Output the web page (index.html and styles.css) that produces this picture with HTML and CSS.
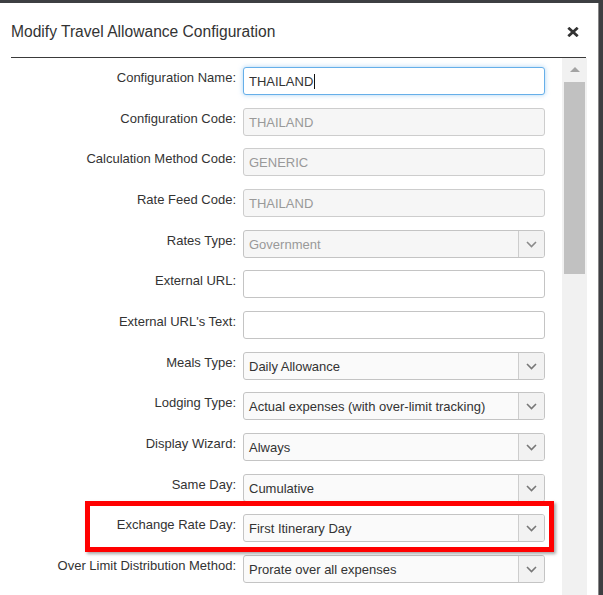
FILE: index.html
```html
<!DOCTYPE html>
<html>
<head>
<meta charset="utf-8">
<link rel="stylesheet" href="styles.css">
</head>
<body>
<div class="modal">
  <div class="header">
    <h1 class="title">Modify Travel Allowance Configuration</h1>
    <button class="close" aria-label="Close">
      <svg width="12" height="10" viewBox="0 0 12 10"><path d="M1.3 0.8 L10.7 9.2 M10.7 0.8 L1.3 9.2" stroke="#333" stroke-width="2.8" stroke-linecap="butt"/></svg>
    </button>
  </div>
  <div class="body">
    <div class="form">
      <label class="lbl">Configuration Name:</label>
      <div class="ctl input focus"><span>THAILAND</span><span class="caret"></span></div>

      <label class="lbl">Configuration Code:</label>
      <div class="ctl input disabled"><span>THAILAND</span></div>

      <label class="lbl">Calculation Method Code:</label>
      <div class="ctl input disabled"><span>GENERIC</span></div>

      <label class="lbl">Rate Feed Code:</label>
      <div class="ctl input disabled"><span>THAILAND</span></div>

      <label class="lbl">Rates Type:</label>
      <div class="ctl select disabled"><span class="val">Government</span><span class="btn"><svg width="11" height="7" viewBox="0 0 11 7"><path d="M1 1 L5.5 5.5 L10 1" fill="none" stroke="#8a8a8a" stroke-width="1.6"/></svg></span></div>

      <label class="lbl">External URL:</label>
      <div class="ctl input"></div>

      <label class="lbl">External URL's Text:</label>
      <div class="ctl input"></div>

      <label class="lbl">Meals Type:</label>
      <div class="ctl select"><span class="val">Daily Allowance</span><span class="btn"><svg width="11" height="7" viewBox="0 0 11 7"><path d="M1 1 L5.5 5.5 L10 1" fill="none" stroke="#777" stroke-width="1.6"/></svg></span></div>

      <label class="lbl">Lodging Type:</label>
      <div class="ctl select"><span class="val">Actual expenses (with over-limit tracking)</span><span class="btn"><svg width="11" height="7" viewBox="0 0 11 7"><path d="M1 1 L5.5 5.5 L10 1" fill="none" stroke="#777" stroke-width="1.6"/></svg></span></div>

      <label class="lbl">Display Wizard:</label>
      <div class="ctl select"><span class="val">Always</span><span class="btn"><svg width="11" height="7" viewBox="0 0 11 7"><path d="M1 1 L5.5 5.5 L10 1" fill="none" stroke="#777" stroke-width="1.6"/></svg></span></div>

      <label class="lbl">Same Day:</label>
      <div class="ctl select"><span class="val">Cumulative</span><span class="btn"><svg width="11" height="7" viewBox="0 0 11 7"><path d="M1 1 L5.5 5.5 L10 1" fill="none" stroke="#777" stroke-width="1.6"/></svg></span></div>

      <label class="lbl">Exchange Rate Day:</label>
      <div class="ctl select"><span class="val">First Itinerary Day</span><span class="btn"><svg width="11" height="7" viewBox="0 0 11 7"><path d="M1 1 L5.5 5.5 L10 1" fill="none" stroke="#777" stroke-width="1.6"/></svg></span></div>

      <label class="lbl">Over Limit Distribution Method:</label>
      <div class="ctl select"><span class="val">Prorate over all expenses</span><span class="btn"><svg width="11" height="7" viewBox="0 0 11 7"><path d="M1 1 L5.5 5.5 L10 1" fill="none" stroke="#777" stroke-width="1.6"/></svg></span></div>
    </div>
    <div class="scrollbar">
      <div class="arrow"></div>
      <div class="thumb"></div>
    </div>
  </div>
</div>
<div class="highlight"></div>
</body>
</html>
```

FILE: styles.css
```css
html, body {
  margin: 0;
  padding: 0;
}
body {
  background: #3d3f42;
  width: 603px;
  height: 595px;
  overflow: hidden;
  padding-top: 3px;
  box-sizing: border-box;
  font-family: "Liberation Sans", Arial, sans-serif;
}
.modal {
  width: 599px;
  height: 592px;
  background: #fff;
  overflow: hidden;
  border-right: 1px solid #888;
  box-sizing: border-box;
}
.header {
  display: flex;
  align-items: center;
  justify-content: space-between;
  height: 54px;
  margin: 0 12px 0 11px;
  border-bottom: 1px solid #3a3a3a;
}
.title {
  margin: 0;
  font-size: 15.6px;
  font-weight: normal;
  color: #333;
  padding-top: 4px;
}
.close {
  border: 0;
  background: none;
  padding: 0;
  margin: 4px 7px 0 0;
  display: flex;
  cursor: pointer;
}
.body {
  display: flex;
  height: 537px;
}
.form {
  width: 562px;
  flex: none;
  box-sizing: border-box;
  padding: 9px 0 0 11px;
  display: grid;
  grid-template-columns: 225px 302px;
  grid-auto-rows: 28px;
  column-gap: 7px;
  row-gap: 12.67px;
  align-content: start;
}
.lbl {
  text-align: right;
  font-size: 13px;
  line-height: 15px;
  color: #333;
  padding-top: 3px;
  white-space: nowrap;
}
.ctl {
  box-sizing: border-box;
  height: 28px;
  border: 1px solid #c4c4c4;
  border-radius: 3px;
  font-size: 13px;
  color: #333;
  display: flex;
  align-items: center;
  background: #fff;
}
.input {
  padding: 1px 5px 0;
}
.input.disabled {
  background: #f6f6f6;
  color: #999;
  border-color: #cdcdcd;
}
.input.focus {
  border-color: #66afe9;
  box-shadow: 0 0 5px rgba(102, 175, 233, 0.55);
}
.caret {
  display: inline-block;
  width: 1px;
  height: 15px;
  background: #111;
  margin-left: 1px;
}
.select {
  background: #fafafa;
  justify-content: space-between;
}
.select .val {
  padding: 1px 5px 0;
  white-space: nowrap;
}
.select .btn {
  align-self: stretch;
  width: 25px;
  border-left: 1px solid #cdcdcd;
  background: #f2f2f2;
  border-radius: 0 2px 2px 0;
  display: flex;
  align-items: center;
  justify-content: center;
  padding-top: 1px;
}
.select.disabled {
  background: #f6f6f6;
  color: #999;
}
.scrollbar {
  width: 25px;
  flex: none;
  background: #f1f1f1;
  display: flex;
  flex-direction: column;
  align-items: center;
}
.arrow {
  margin-top: 9px;
  width: 0;
  height: 0;
  border-left: 5px solid transparent;
  border-right: 5px solid transparent;
  border-bottom: 5px solid #a3a3a3;
}
.thumb {
  margin-top: 10px;
  width: 21px;
  height: 192px;
  background: #c1c1c1;
}
.highlight {
  position: absolute;
  left: 85px;
  top: 501px;
  width: 469px;
  height: 51px;
  box-sizing: border-box;
  border: 5px solid #ff0000;
  box-shadow: 2px 2px 3px rgba(0, 0, 0, 0.35);
}
```
